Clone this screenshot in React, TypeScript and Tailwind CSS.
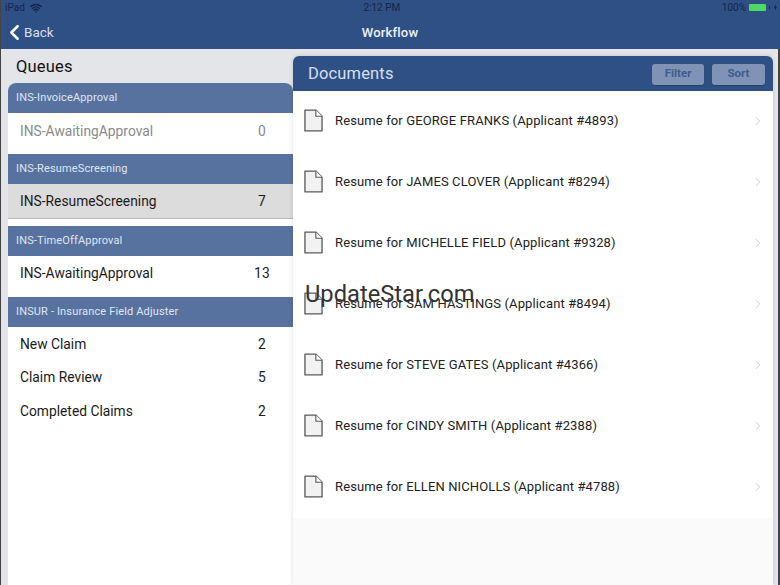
import { ChevronLeft, ChevronRight, Wifi } from 'lucide-react'

const QUEUES = [
  { title: 'INS-InvoiceApproval', rows: [{ name: 'INS-AwaitingApproval', count: 0, muted: true }] },
  { title: 'INS-ResumeScreening', rows: [{ name: 'INS-ResumeScreening', count: 7, selected: true }] },
  { title: 'INS-TimeOffApproval', rows: [{ name: 'INS-AwaitingApproval', count: 13 }] },
  {
    title: 'INSUR - Insurance Field Adjuster',
    rows: [
      { name: 'New Claim', count: 2, compact: true },
      { name: 'Claim Review', count: 5, compact: true },
      { name: 'Completed Claims', count: 2, compact: true },
    ],
  },
]

const DOCUMENTS = [
  'Resume for GEORGE FRANKS (Applicant #4893)',
  'Resume for JAMES CLOVER (Applicant #8294)',
  'Resume for MICHELLE FIELD (Applicant #9328)',
  'Resume for SAM HASTINGS (Applicant #8494)',
  'Resume for STEVE GATES (Applicant #4366)',
  'Resume for CINDY SMITH (Applicant #2388)',
  'Resume for ELLEN NICHOLLS (Applicant #4788)',
]

function DocIcon() {
  return (
    <svg width="19" height="23" viewBox="0 0 20 24" className="shrink-0 -mt-[2px]">
      <path d="M1 1H12.5L19 7.5V23H1Z" fill="#f2f2f2" stroke="#5a5a5a" strokeWidth="1.4" strokeLinejoin="round" />
      <path d="M12.5 1V7.5H19" fill="#fff" stroke="#5a5a5a" strokeWidth="1.2" />
    </svg>
  )
}

export default function App() {
  return (
    <div className="relative w-[780px] h-[585px] overflow-hidden bg-[#e3e5e8] font-['Roboto',sans-serif]">
      {/* Nav bar */}
      <div className="h-[49px] bg-[#2f5085] text-white flex flex-col">
        <div className="h-[15px] flex items-center justify-between pl-[5px] pr-[3px] text-[10px] text-[#14264a]">
          <div className="flex items-center gap-[5px]">
            <span>iPad</span>
            <Wifi className="w-3 h-3 text-[#14264a]" strokeWidth={3} />
          </div>
          <span className="text-[10px] text-[#14264a]">2:12 PM</span>
          <div className="flex items-center gap-[3px]">
            <span>100%</span>
            <div className="w-[17px] h-[7px] bg-[#4cd964] rounded-[1px]" />
            <div className="w-[1px] h-[3px] bg-[#14264a]" />
            <div className="w-[3px] h-[7px] ml-[1px] bg-[#14264a] [clip-path:polygon(60%_0,0_60%,45%_60%,40%_100%,100%_40%,55%_40%)]" />
          </div>
        </div>
        <div className="flex-1 grid grid-cols-3 items-center pt-[1px]">
          <div className="flex items-center pl-[2px] text-[#d5deea] text-[13.5px]">
            <ChevronLeft className="w-[25px] h-[25px] text-white" strokeWidth={2.4} />
            <span className="-ml-[3px]">Back</span>
          </div>
          <span className="text-center font-medium text-[13px] text-[#eef2f7] tracking-[0.2px]">Workflow</span>
        </div>
      </div>

      <div className="flex h-[536px]">
        {/* Queues column */}
        <div className="w-[293px] pl-2 flex flex-col shrink-0">
          <div className="h-[34px] pl-2 pt-[6px] text-[16.5px] text-[#111] tracking-[0.2px]">Queues</div>
          <div className="flex-1 bg-white rounded-t-[8px] overflow-hidden">
            {QUEUES.map(section => (
              <div key={section.title} className={section.rows[0].selected ? 'pb-[6.5px]' : ''}>
                <div className="h-[30px] bg-[#5872a0] flex items-center pl-2 pt-[1px] text-[11px] text-[#dfe6f0] tracking-[0.15px]">
                  {section.title}
                </div>
                <div className={section.rows[0].compact ? 'pt-[1px]' : ''}>
                  {section.rows.map(row => (
                    <div
                      key={row.name}
                      className={
                        'flex justify-between pl-3 text-[13.8px] ' +
                        (row.compact ? 'h-[33.5px] items-center text-[#1a1a1a] ' : row.selected ? 'h-[35px] items-center ' : 'h-[41px] pt-[7.5px] ') +
                        (row.selected ? 'bg-[#dcdcdc] border-b border-[#b5b5b5] text-[#1a1a1a]' : row.muted ? 'text-[#8a8a8a]' : 'text-[#1a1a1a]')
                      }
                    >
                      <span>{row.name}</span>
                      <span className="w-[30px] mr-[16px] text-center tracking-[0.3px]">{row.count}</span>
                    </div>
                  ))}
                </div>
              </div>
            ))}
          </div>
        </div>

        {/* Documents panel */}
        <div className="w-[480px] mt-[7px] flex flex-col bg-[#fafafa] rounded-t-[6px] overflow-hidden shadow-[0_0_4px_rgba(0,0,0,0.15)]">
          <div className="h-[35px] shrink-0 bg-[#2f5085] flex items-center justify-between pl-[15px] pr-2">
            <span className="pt-[1px] text-[16.5px] text-[#d5e0ee] tracking-[0.15px]">Documents</span>
            <div className="flex gap-2 pt-[1px]">
              <div className="w-[52px] h-[21px] rounded-[3px] bg-[#7e93b5] text-[#3f5c8d] text-[11.5px] font-bold flex items-center justify-center shadow-[0_1px_1px_rgba(0,0,0,0.2)]">
                Filter
              </div>
              <div className="w-[53px] h-[21px] rounded-[3px] bg-[#7e93b5] text-[#3f5c8d] text-[11.5px] font-bold flex items-center justify-center shadow-[0_1px_1px_rgba(0,0,0,0.2)]">
                Sort
              </div>
            </div>
          </div>
          <div className="bg-white">
            {DOCUMENTS.map(doc => (
              <div key={doc} className="h-[61px] flex items-center pl-[11px] pr-[8px]">
                <DocIcon />
                <span className="ml-[12px] flex-1 -mt-[2px] text-[13px] text-[#222] tracking-[0.12px]">{doc}</span>
                <ChevronRight className="w-[14px] h-[14px] text-[#c8c8cc] -mt-[1px]" strokeWidth={1.6} />
              </div>
            ))}
          </div>
        </div>
      </div>

      {/* Watermark + edge lines */}
      <div className="absolute left-[305px] top-[279px] text-[23.7px] text-[#333] leading-[30px]">UpdateStar.com</div>
      <div className="absolute left-0 top-0 bottom-0 w-[1px] bg-[#444]" />
      <div className="absolute right-0 top-[49px] bottom-0 w-[2px] bg-[#444]" />
    </div>
  )
}
